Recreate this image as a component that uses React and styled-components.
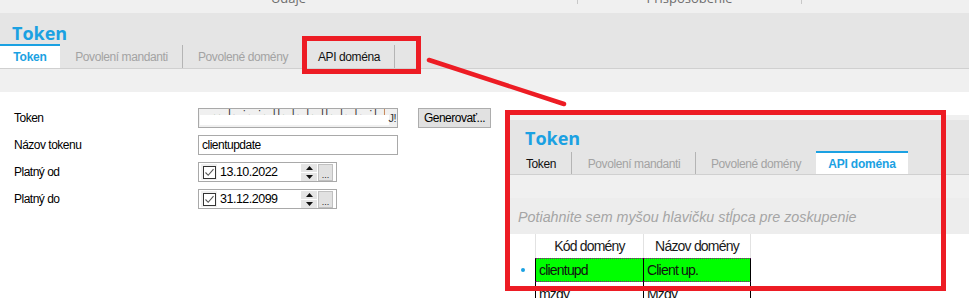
import React from 'react';
import styled, { createGlobalStyle } from 'styled-components';

const GlobalStyle = createGlobalStyle`
  html, body {
    margin: 0;
    padding: 0;
    background: #ffffff;
  }
  body {
    width: 969px;
    height: 298px;
    overflow: hidden;
    font-family: 'Liberation Sans', Arial, sans-serif;
  }
`;

const RED = '#ed1c24';
const BLUE = '#1ba1e2';

const Page = styled.div`
  position: relative;
  width: 969px;
  height: 298px;
  overflow: hidden;
  display: flex;
  flex-direction: column;
  background: #fff;
`;

/* ribbon group labels, mostly cut off at the top */
const RibbonLabels = styled.div`
  display: flex;
  height: 13px;
  background: #f0f0f0;
  overflow: hidden;
`;

const RibbonGroup = styled.div`
  width: ${(p) => p.width}px;
  flex: ${(p) => (p.width ? 'none' : '1')};
  border-right: ${(p) => (p.last ? 'none' : '1px solid #c8c8c8')};
  height: 4px;
  display: flex;
  justify-content: center;
  overflow: visible;
`;

const RibbonText = styled.span`
  font-family: 'Open Sans', sans-serif;
  font-size: 13px;
  line-height: 13px;
  color: #6d6d6d;
  margin-top: -8px;
  white-space: nowrap;
`;

const Header = styled.div`
  background: #e5e5e5;
  padding-top: ${(p) => p.pt}px;
  display: flex;
  flex-direction: column;
  flex-shrink: 0;
`;

const Title = styled.div`
  font-family: 'Open Sans', sans-serif;
  font-weight: 700;
  font-size: 18px;
  line-height: 22px;
  color: ${BLUE};
  padding-left: ${(p) => p.pl}px;
  margin-bottom: ${(p) => p.mb}px;
`;

const TabBar = styled.div`
  display: flex;
  height: ${(p) => p.h}px;
  border-bottom: 1px solid #d0d0d0;
  padding-left: ${(p) => p.pl || 0}px;
`;

const Tab = styled.div`
  display: flex;
  align-items: center;
  justify-content: center;
  width: ${(p) => p.w}px;
  height: 100%;
  box-sizing: border-box;
  font-family: 'Liberation Sans', Arial, sans-serif;
  font-size: 12px;
  letter-spacing: ${(p) => (p.active ? '-0.2px' : '-0.4px')};
  white-space: nowrap;
  color: ${(p) => (p.active ? BLUE : p.dark ? '#111' : '#a3a3a3')};
  font-weight: ${(p) => (p.active ? 700 : 400)};
  background: ${(p) => (p.active ? '#fff' : 'transparent')};
  border-top: 2px solid ${(p) => (p.active ? BLUE : 'transparent')};
  position: relative;
  &::after {
    content: '';
    display: ${(p) => (p.sep ? 'block' : 'none')};
    position: absolute;
    right: 0;
    top: -1px;
    bottom: 0;
    width: 1px;
    background: #b4b4b4;
  }
`;

const SubStrip = styled.div`
  height: ${(p) => p.h}px;
  flex-shrink: 0;
  background: ${(p) => p.bg || '#f0f0f0'};
`;

const Form = styled.div`
  display: grid;
  grid-template-columns: 184px auto;
  grid-auto-rows: 20px;
  row-gap: 7px;
  padding: 16px 0 0 14px;
  align-items: center;
  font-size: 12px;
  letter-spacing: -0.5px;
`;

const Label = styled.div`
  color: #000;
`;

const FieldRow = styled.div`
  display: flex;
  align-items: center;
  gap: 20px;
`;

const TextField = styled.div`
  position: relative;
  width: 200px;
  height: 20px;
  box-sizing: border-box;
  border: 1px solid #a9a9a9;
  background: ${(p) => (p.readOnly ? '#f0f0f0' : '#fff')};
  line-height: 18px;
  padding-left: 3px;
  overflow: hidden;
  white-space: nowrap;
`;

const Scribble = styled.span`
  position: absolute;
  left: 14px;
  right: 12px;
  top: -6px;
  overflow: hidden;
  font-size: 11px;
  letter-spacing: 2px;
  color: #3a3a3a;
`;

const Redaction = styled.span`
  position: absolute;
  left: 1px;
  right: 8px;
  top: 6px;
  height: 10px;
  background: #fff;
`;

const TailText = styled.span`
  position: absolute;
  right: 1px;
  top: 0;
  color: #333;
  font-size: 11px;
`;

const Button = styled.div`
  width: 73px;
  height: 20px;
  box-sizing: border-box;
  background: #e1e1e1;
  border: 1px solid #adadad;
  line-height: 18px;
  text-align: center;
`;

const DateBox = styled.div`
  width: 139px;
  height: 20px;
  box-sizing: border-box;
  border: 1px solid #a9a9a9;
  background: #fff;
  display: flex;
  align-items: center;
  padding: 0 3px 0 2px;
`;

const CheckWrap = styled.div`
  width: 16px;
  height: 16px;
  background: #f0f0f0;
  display: flex;
  align-items: center;
  justify-content: center;
  margin-right: 3px;
`;

const CheckBox = styled.div`
  width: 13px;
  height: 13px;
  box-sizing: border-box;
  border: 1px solid #333;
  background: #fff;
  display: flex;
  align-items: center;
  justify-content: center;
`;

const DateText = styled.span`
  font-size: 12.5px;
  flex: 1;
`;

const Spinner = styled.div`
  width: 16px;
  height: 17px;
  display: flex;
  flex-direction: column;
  gap: 1px;
  margin-right: 1px;
`;

const SpinHalf = styled.div`
  flex: 1;
  background: #e5e5e5;
  display: flex;
  align-items: center;
  justify-content: center;
`;

const DotsButton = styled.div`
  width: 15px;
  height: 17px;
  box-sizing: border-box;
  background: #e1e1e1;
  border: 1px solid #c0c0c0;
  font-size: 9px;
  letter-spacing: 0;
  line-height: 20px;
  text-align: center;
  color: #222;
`;

/* annotation overlays */
const RedBox = styled.div`
  position: absolute;
  left: ${(p) => p.x}px;
  top: ${(p) => p.y}px;
  width: ${(p) => p.w}px;
  height: ${(p) => p.h}px;
  box-sizing: border-box;
  border: 5px solid ${RED};
  z-index: 3;
`;

const ArrowSvg = styled.svg`
  position: absolute;
  left: 0;
  top: 0;
  z-index: 3;
  pointer-events: none;
`;

/* pasted screenshot of the API doména tab */
const Inset = styled.div`
  position: absolute;
  left: 508px;
  top: 115px;
  width: 461px;
  height: 183px;
  overflow: hidden;
  background: #fff;
  z-index: 2;
`;

const GroupPanel = styled.div`
  height: 36px;
  background: #ededed;
  display: flex;
  align-items: center;
  padding: 2px 0 0 10px;
  box-sizing: border-box;
  font-style: italic;
  font-size: 14.3px;
  color: #a5a5a5;
  white-space: nowrap;
`;

const GridRow = styled.div`
  display: grid;
  grid-template-columns: 27px 108px 108px;
  height: 24px;
  background: #fff;
  font-size: 14px;
  letter-spacing: -0.8px;
`;

const Indicator = styled.div`
  display: flex;
  align-items: center;
  justify-content: center;
  padding-left: 2px;
`;

const Dot = styled.span`
  width: 4px;
  height: 4px;
  border-radius: 50%;
  background: ${BLUE};
`;

const HeadCell = styled.div`
  border-left: 1px solid #e2e2e2;
  border-right: ${(p) => (p.last ? '1px solid #e2e2e2' : 'none')};
  display: flex;
  align-items: center;
  justify-content: center;
  color: #1a1a1a;
`;

const Cell = styled.div`
  border-left: 1px solid #000;
  border-right: ${(p) => (p.last ? '1px solid #000' : 'none')};
  background: ${(p) => (p.selected ? '#00ff00' : '#fff')};
  border-top: ${(p) => (p.selected ? '1px dotted #8b008b' : 'none')};
  border-bottom: ${(p) => (p.selected ? '1px dotted #8b008b' : 'none')};
  display: flex;
  align-items: center;
  padding-left: 3px;
  color: #111;
`;

const mainTabs = [
  { label: 'Token', active: true, w: 60 },
  { label: 'Povolení mandanti', w: 123, sep: true },
  { label: 'Povolené domény', w: 120 },
  { label: 'API doména', w: 92, dark: true, sep: true },
];

const insetTabs = [
  { label: 'Token', w: 62, dark: true, sep: true },
  { label: 'Povolení mandanti', w: 124, sep: true },
  { label: 'Povolené domény', w: 120 },
  { label: 'API doména', w: 92, active: true },
];

const Check = () => (
  <svg width="11" height="11" viewBox="0 0 11 11">
    <path d="M1.5 5.5 L4.2 8.3 L9.5 2.2" fill="none" stroke="#555" strokeWidth="1.1" />
  </svg>
);

const Tri = ({ up }) => (
  <svg width="7" height="4" viewBox="0 0 7 4">
    <path d={up ? 'M0 4 L3.5 0 L7 4 Z' : 'M0 0 L3.5 4 L7 0 Z'} fill="#111" />
  </svg>
);

const DatePicker = ({ value }) => (
  <DateBox>
    <CheckWrap>
      <CheckBox>
        <Check />
      </CheckBox>
    </CheckWrap>
    <DateText>{value}</DateText>
    <Spinner>
      <SpinHalf>
        <Tri up />
      </SpinHalf>
      <SpinHalf>
        <Tri />
      </SpinHalf>
    </Spinner>
    <DotsButton>...</DotsButton>
  </DateBox>
);

const App = () => (
  <Page>
    <GlobalStyle />
    <RibbonLabels>
      <RibbonGroup width={577}>
        <RibbonText>Údaje</RibbonText>
      </RibbonGroup>
      <RibbonGroup width={223}>
        <RibbonText>Prispôsobenie</RibbonText>
      </RibbonGroup>
      <RibbonGroup last />
    </RibbonLabels>

    <Header pt={9}>
      <Title pl={12} mb={0}>Token</Title>
      <TabBar h={24}>
        {mainTabs.map((t) => (
          <Tab key={t.label} {...t}>
            {t.label}
          </Tab>
        ))}
      </TabBar>
    </Header>
    <SubStrip h={23} />

    <Form>
      <Label>Token</Label>
      <FieldRow>
        <TextField readOnly>
          <Scribble>.. l. ;. ;. ll. l. l. ll. l. l. ;l l l;l. ;l .l l l l. ;l l</Scribble>
          <Redaction />
          <TailText>J!</TailText>
        </TextField>
        <Button>Generovať...</Button>
      </FieldRow>
      <Label>Názov tokenu</Label>
      <FieldRow>
        <TextField>clientupdate</TextField>
      </FieldRow>
      <Label>Platný od</Label>
      <FieldRow>
        <DatePicker value="13.10.2022" />
      </FieldRow>
      <Label>Platný do</Label>
      <FieldRow>
        <DatePicker value="31.12.2099" />
      </FieldRow>
    </Form>

    <Inset>
      <SubStrip h={5} />
      <Header pt={7}>
        <Title pl={17} mb={2}>Token</Title>
        <TabBar h={23} pl={2}>
          {insetTabs.map((t) => (
            <Tab key={t.label} {...t}>
              {t.label}
            </Tab>
          ))}
        </TabBar>
      </Header>
      <SubStrip h={23} />
      <GroupPanel>Potiahnite sem myšou hlavičku stĺpca pre zoskupenie</GroupPanel>
      <GridRow>
        <Indicator />
        <HeadCell>Kód domény</HeadCell>
        <HeadCell last>Názov domény</HeadCell>
      </GridRow>
      <GridRow>
        <Indicator>
          <Dot />
        </Indicator>
        <Cell selected>clientupd</Cell>
        <Cell selected last>Client up.</Cell>
      </GridRow>
      <GridRow>
        <Indicator />
        <Cell>mzdy</Cell>
        <Cell last>Mzdy</Cell>
      </GridRow>
    </Inset>

    <RedBox x={302} y={36} w={119} h={38} />
    <RedBox x={505} y={110} w={441} h={181} />
    <ArrowSvg width="969" height="298">
      <line x1="429" y1="60" x2="564" y2="104" stroke={RED} strokeWidth="4.5" strokeLinecap="round" />
    </ArrowSvg>
  </Page>
);

export default App;
